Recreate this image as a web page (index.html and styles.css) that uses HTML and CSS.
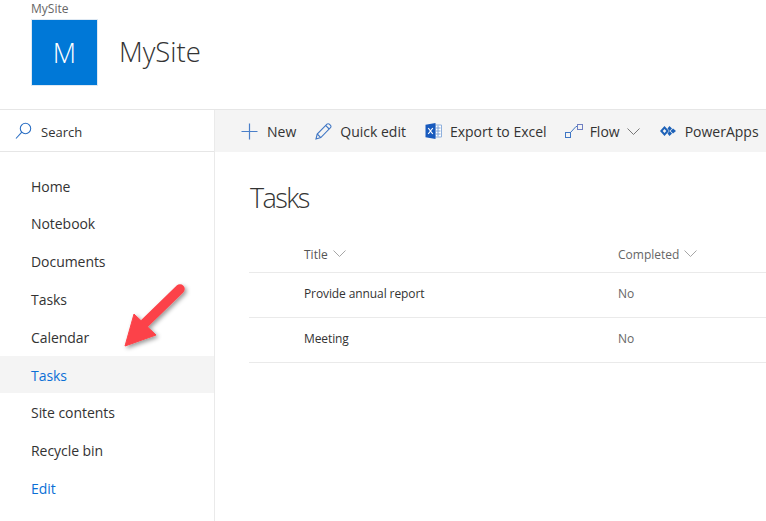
FILE: index.html
```html
<!DOCTYPE html>
<html lang="en">
<head>
    <meta charset="UTF-8">
    <meta name="viewport" content="width=device-width, initial-scale=1.0">
    <title>Tasks - MySite</title>
    <link rel="stylesheet" href="styles.css">
</head>
<body>
    <header class="site-header">
        <div class="site-crumb">MySite</div>
        <div class="site-brand">
            <div class="site-logo">M</div>
            <div class="site-name">MySite</div>
        </div>
    </header>

    <div class="page">
        <aside class="sidebar">
            <div class="search">
                <svg class="search-icon" width="18" height="18" viewBox="0 0 18 18" fill="none" stroke="#2b6fc4" stroke-width="1.1">
                    <circle cx="10.5" cy="6.5" r="5.2"/>
                    <path d="M6.8 10.2 1 16.5"/>
                </svg>
                <span>Search</span>
            </div>
            <nav class="side-nav">
                <a href="#">Home</a>
                <a href="#">Notebook</a>
                <a href="#">Documents</a>
                <a href="#">Tasks</a>
                <a href="#">Calendar</a>
                <a href="#" class="active">Tasks</a>
                <a href="#">Site contents</a>
                <a href="#">Recycle bin</a>
                <a href="#" class="edit">Edit</a>
            </nav>
        </aside>

        <div class="content">
            <div class="command-bar">
                <div class="command command-new">
                    <svg width="17" height="17" viewBox="0 0 17 17" stroke="#4a7fc9" stroke-width="1.2" fill="none">
                        <path d="M8.5 0.5v16M0.5 8.5h16"/>
                    </svg>
                    <span>New</span>
                </div>
                <div class="command">
                    <svg width="17" height="17" viewBox="0 0 17 17" stroke="#3f76c4" stroke-width="1.1" fill="none">
                        <path d="M1 16 2.2 11 12 1.2a1.6 1.6 0 0 1 2.3 0l1.2 1.2a1.6 1.6 0 0 1 0 2.3L5.8 14.6Z"/>
                        <path d="M2.2 11 5.8 14.6M10.8 2.6l3.4 3.4"/>
                    </svg>
                    <span>Quick edit</span>
                </div>
                <div class="command">
                    <svg width="17" height="16" viewBox="0 0 17 16">
                        <path d="M10 2h6.5v12H10Z" fill="#fff" stroke="#8fb0dc" stroke-width="1"/>
                        <path d="M11 5h4.5M11 8h4.5M11 11h4.5M13 2.500v11" stroke="#7fa3d6" stroke-width="1"/>
                        <path d="M0.500 1.800 10.500 0v16L0.500 14.200Z" fill="#185abd"/>
                        <path d="M3.200 5 5.500 8 3.200 11M7.800 5 5.500 8 7.800 11" stroke="#fff" stroke-width="1.200" fill="none"/>
                    </svg>
                    <span>Export to Excel</span>
                </div>
                <div class="command command-flow">
                    <svg width="18" height="14" viewBox="0 0 18 14" fill="none" stroke="#3f76c4" stroke-width="1">
                        <rect x="0.500" y="8.500" width="5" height="5"/>
                        <path d="M5.500 8.500 11 2.500H12.500"/>
                        <rect x="12.500" y="0.500" width="5" height="5" stroke="#6f7fc2"/>
                    </svg>
                    <span>Flow</span>
                    <svg class="chevron" width="13" height="7" viewBox="0 0 13 7" fill="none" stroke="#777" stroke-width="1">
                        <path d="M0.500 0.500 6.500 6.500 12.500 0.500"/>
                    </svg>
                </div>
                <div class="command command-apps">
                    <svg width="16" height="10" viewBox="0 0 16 10" fill="#1e62b8">
                        <path d="M4.500 0 9 5 4.500 10 0 5ZM4.500 3 2.700 5 4.500 7 6.300 5Z" fill-rule="evenodd"/>
                        <path d="M9.500 0 12 2.500 9.500 5 7.500 2.500ZM9.500 5 12 7.500 9.500 10 7.500 7.500Z"/>
                        <path d="M13 2.500 16 5 13 7.500 10.500 5Z"/>
                    </svg>
                    <span>PowerApps</span>
                </div>
            </div>

            <main class="main">
                <h1 class="list-title">Tasks</h1>
                <div class="list-row list-head">
                    <div class="col-title">Title
                        <svg class="sort" width="13" height="7" viewBox="0 0 13 7" fill="none" stroke="#a6a6a6"><path d="M0.500 0.500 6.500 6.500 12.500 0.500"/></svg>
                    </div>
                    <div class="col-done">Completed
                        <svg class="sort" width="13" height="7" viewBox="0 0 13 7" fill="none" stroke="#a6a6a6"><path d="M0.500 0.500 6.500 6.500 12.500 0.500"/></svg>
                    </div>
                </div>
                <div class="list-row">
                    <div class="col-title">Provide annual report</div>
                    <div class="col-done">No</div>
                </div>
                <div class="list-row">
                    <div class="col-title">Meeting</div>
                    <div class="col-done">No</div>
                </div>
            </main>
        </div>
    </div>

    <!-- annotation arrow drawn over the screenshot -->
    <svg class="arrow" width="80" height="80" viewBox="0 0 80 80">
        <defs>
            <filter id="arrow-shadow" x="-20%" y="-20%" width="150%" height="150%">
                <feDropShadow dx="2" dy="2" stdDeviation="2" flood-color="#000" flood-opacity="0.4"/>
            </filter>
        </defs>
        <g filter="url(#arrow-shadow)">
            <path d="M61 11 26 45" stroke="#fc4349" stroke-width="9.500" stroke-linecap="round" fill="none"/>
            <path d="M15 36 6 68 37 57Z" fill="#fc4349" stroke="#fc4349" stroke-width="1" stroke-linejoin="round"/>
        </g>
    </svg>
</body>
</html>
```

FILE: styles.css
```css
* {
    box-sizing: border-box;
}
body {
    font-family: "Open Sans", "Noto Sans", sans-serif;
    margin: 0;
    height: 521px;
    overflow: hidden;
    background-color: #fff;
    color: #333;
    position: relative;
}
.site-header {
    height: 110px;
    padding: 1px 0 0 31px;
    border-bottom: 1px solid #e6e6e6;
}
.site-crumb {
    font-size: 12px;
    line-height: 15px;
    color: #666;
}
.site-brand {
    display: flex;
    align-items: center;
    margin-top: 3px;
}
.site-logo {
    width: 67px;
    height: 67px;
    background-color: #0078d7;
    border: 1px solid #dfe9f3;
    color: #fff;
    font-size: 27px;
    font-weight: 300;
    display: flex;
    align-items: center;
    justify-content: center;
}
.site-name {
    margin: 0 0 3px 21px;
    font-size: 27.5px;
    font-weight: 300;
    color: #333;
}
.page {
    display: flex;
    height: 411px;
}
.sidebar {
    width: 215px;
    flex-shrink: 0;
    border-right: 1px solid #eaeaea;
}
.search {
    height: 42px;
    padding: 2px 0 0 15px;
    display: flex;
    align-items: center;
    font-size: 13px;
    border-bottom: 1px solid #e6e6e6;
}
.search-icon {
    margin: -2px 8px 0 0;
}
.side-nav {
    padding-top: 15.7px;
}
.side-nav a {
    display: block;
    height: 37.75px;
    line-height: 37px;
    padding-left: 31px;
    font-size: 14px;
    letter-spacing: -0.05px;
    color: #333;
    text-decoration: none;
}
.side-nav a.active {
    background-color: #f4f4f4;
    height: 37px;
    margin-bottom: 0.75px;
    line-height: 39px;
    color: #0b6fd6;
}
.side-nav a.edit {
    color: #0b6fd6;
}
.content {
    flex: 1;
    min-width: 0;
}
.command-bar {
    height: 42px;
    background-color: #f4f4f4;
    padding-left: 26px;
    display: flex;
    align-items: center;
    gap: 19px;
    white-space: nowrap;
    font-size: 14px;
}
.command {
    display: flex;
    align-items: center;
    gap: 8px;
}
.command-new {
    gap: 9px;
}
.command-flow {
    margin-left: -1px;
    gap: 7px;
}
.command-apps {
    margin-left: 1px;
    gap: 9px;
}
.main {
    padding: 27px 0 0 34px;
}
.list-title {
    margin: 0 0 0 1px;
    font-size: 27px;
    font-weight: 300;
    line-height: 38px;
    letter-spacing: -1.6px;
    color: #333;
}
.list-row {
    height: 45px;
    padding-bottom: 4px;
    display: flex;
    align-items: center;
    border-bottom: 1px solid #eaeaea;
    font-size: 12px;
    letter-spacing: -0.1px;
    color: #333;
}
.list-head {
    height: 56px;
    padding: 20px 0 0;
    letter-spacing: 0;
    color: #555;
}
.col-title {
    margin-left: 55px;
    width: 314px;
}
.col-done {
    color: #666;
}
.sort {
    margin-left: 2px;
    vertical-align: 2px;
}
.arrow {
    position: absolute;
    left: 119px;
    top: 278px;
}
```
